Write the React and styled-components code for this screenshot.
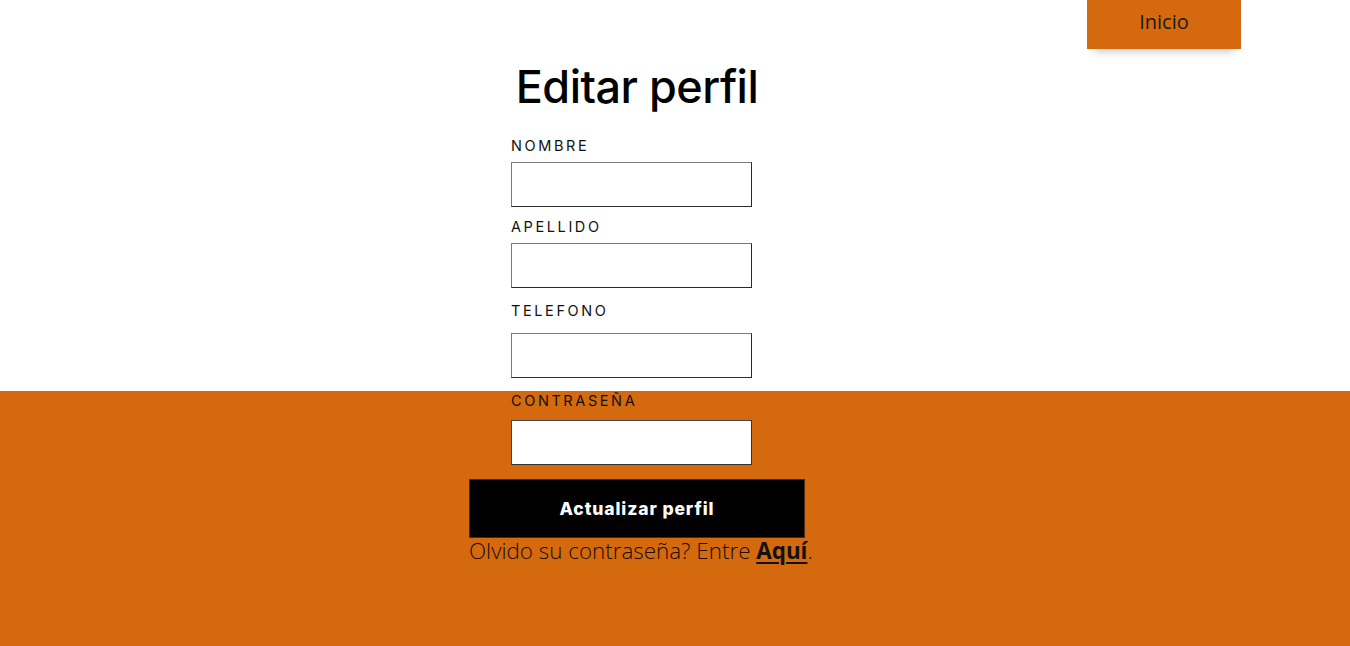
import React from "react";
import styled, { createGlobalStyle } from "styled-components";

const ORANGE = "#d5690e";

const Global = createGlobalStyle`
  html, body { margin: 0; padding: 0; }
  body {
    font-family: "Open Sans", "Liberation Sans", sans-serif;
    background: #fff;
  }
  * { box-sizing: border-box; }
`;

const Page = styled.div`
  min-height: 646px;
  background: linear-gradient(to bottom, #fff 0, #fff 391px, ${ORANGE} 391px, ${ORANGE} 100%);
  display: flex;
  flex-direction: column;
`;

const Header = styled.header`
  height: 49px;
  display: flex;
  justify-content: flex-end;
  padding-right: 109px;
`;

const NavButton = styled.a`
  width: 154px;
  height: 49px;
  background: ${ORANGE};
  color: #1a1a1a;
  font-family: "Open Sans", sans-serif;
  font-size: 20px;
  display: flex;
  align-items: center;
  justify-content: center;
  padding-bottom: 7px;
  text-decoration: none;
  box-shadow: 0 10px 8px -7px rgba(0, 0, 0, 0.2);
`;

const Main = styled.main`
  display: flex;
  justify-content: center;
  padding-right: 76px;
`;

const Form = styled.form`
  width: 336px;
  display: flex;
  flex-direction: column;
  align-items: stretch;
`;

const Title = styled.h1`
  margin: 10px 0 0;
  font-family: "Inter", sans-serif;
  font-weight: 500;
  font-size: 45px;
  line-height: 56px;
  letter-spacing: -0.5px;
  text-align: center;
  color: #000;
`;

const Field = styled.div`
  margin-left: 42px;
  width: 241px;
  margin-top: ${(p) => p.$top}px;
  display: flex;
  flex-direction: column;
`;

const Label = styled.label`
  font-family: "Inter", sans-serif;
  font-size: 14.5px;
  line-height: 18px;
  letter-spacing: 2.6px;
  color: #111;
  margin-bottom: ${(p) => p.$gap}px;
`;

const Input = styled.input`
  width: 241px;
  height: 45px;
  background: #fff;
  border: 1px solid;
  border-color: ${(p) => (p.$dark ? "#444 #333 #333 #444" : "#7a7a7a #2b2b2b #2b2b2b #7a7a7a")};
  padding: 0 8px;
  font-size: 16px;
  outline: none;
`;

const Submit = styled.button`
  margin-top: 14px;
  width: 336px;
  height: 59px;
  background: #000;
  border: 1px solid #4a2a0c;
  color: #fff;
  font-family: "Inter", sans-serif;
  font-weight: 800;
  font-size: 17.5px;
  letter-spacing: 0.9px;
  cursor: pointer;
`;

const Note = styled.p`
  margin: 0;
  font-family: "Open Sans", sans-serif;
  font-weight: 300;
  font-size: 22.4px;
  line-height: 26px;
  color: #1a0d00;
  white-space: nowrap;
`;

const NoteLink = styled.a`
  font-weight: 700;
  color: #111;
  text-decoration: underline;
  text-underline-offset: 3px;
`;

const fields = [
  { label: "NOMBRE", top: 22, gap: 7 },
  { label: "APELLIDO", top: 10.5, gap: 7.5 },
  { label: "TELEFONO", top: 13.5, gap: 13.5 },
  { label: "CONTRASEÑA", top: 13.5, gap: 10.5, type: "password", dark: true },
];

export default function App() {
  return (
    <>
      <Global />
      <Page>
        <Header>
          <NavButton href="#">Inicio</NavButton>
        </Header>
        <Main>
          <Form onSubmit={(e) => e.preventDefault()}>
            <Title>Editar perfil</Title>
            {fields.map((f) => (
              <Field key={f.label} $top={f.top}>
                <Label $gap={f.gap}>{f.label}</Label>
                <Input type={f.type || "text"} $dark={f.dark} />
              </Field>
            ))}
            <Submit type="submit">Actualizar perfil</Submit>
            <Note>
              Olvido su contraseña? Entre <NoteLink href="#">Aquí</NoteLink>.
            </Note>
          </Form>
        </Main>
      </Page>
    </>
  );
}
